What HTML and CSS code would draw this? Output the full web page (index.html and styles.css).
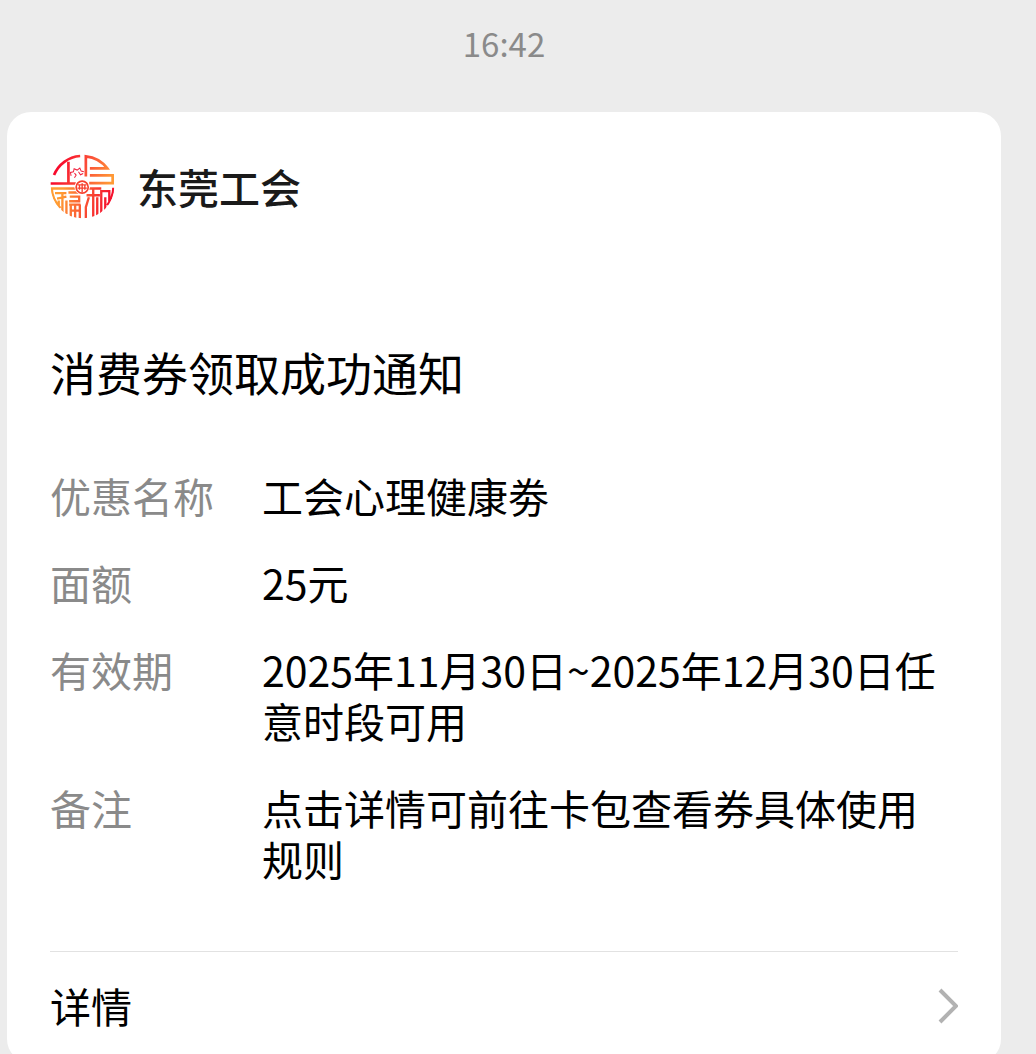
FILE: index.html
```html
<!DOCTYPE html>
<html lang="zh-CN">
<head>
  <meta charset="utf-8">
  <meta name="viewport" content="width=device-width, initial-scale=1">
  <title>东莞工会</title>
  <link rel="stylesheet" href="styles.css">
</head>

<body>
  <main class="chat">
    <time class="time" datetime="16:42">16:42</time>

    <article class="card">
      <header class="account">
        <svg class="logo" viewBox="29 27 194 194" aria-hidden="true">
          <defs>
            <linearGradient id="top" gradientUnits="userSpaceOnUse" x1="60" y1="50" x2="210" y2="110">
              <stop offset="0" stop-color="#f80a2c"/>
              <stop offset="0.5" stop-color="#fb5038"/>
              <stop offset="1" stop-color="#ff9a35"/>
            </linearGradient>
            <linearGradient id="bottom" gradientUnits="userSpaceOnUse" x1="60" y1="150" x2="200" y2="190">
              <stop offset="0" stop-color="#ff9c33"/>
              <stop offset="0.45" stop-color="#fb5f35"/>
              <stop offset="1" stop-color="#f5102c"/>
            </linearGradient>
            <clipPath id="disc">
              <circle cx="126" cy="124" r="95"/>
            </clipPath>
          </defs>
          <g fill="none" stroke="url(#top)" stroke-width="8">
            <path d="M41 90A91 91 0 0 1 119 33M84 50V114M31 115H106"/>
            <path d="M136 94V34A91 91 0 0 1 200 70H148M148 91H216V114H146"/>
          </g>
          <g fill="none" stroke="url(#bottom)" stroke-width="7" clip-path="url(#disc)">
            <path d="M31 130H106M34 128A92 92 0 0 0 60 188M44 144H78M66 144V202M50 160L78 154M55 166V188M78 166V206"/>
            <path d="M84 142H120M88 154H116V168H86M91 178V222M104 178V222M118 178V222M86 178H120M88 196H120"/>
            <path d="M144 130H182M138 150H178M158 130V222M145 156L136 186V222M170 156V222M182 222V138H206V196M194 156V206M218 128A92 92 0 0 1 200 180"/>
          </g>
          <!-- flower -->
          <path d="M92 92l-2-10 9-2 2-9 9 4 8-6 4 9 8 2M102 84l5 6-5 8M114 80l6 9 8-4" fill="none" stroke="#f0203c" stroke-width="3"/>
          <circle cx="125" cy="126" r="23" fill="#fff"/>
          <circle cx="125" cy="126" r="18" fill="none" stroke="#f7402e" stroke-width="5"/>
          <path d="M112 119H138M125 114V141M111 129H139M117 119V134M133 119V134" fill="none" stroke="#f7402e" stroke-width="4"/>
        </svg>
        <span class="account-name">东莞工会</span>
      </header>

      <h1 class="title">消费券领取成功通知</h1>

      <dl class="fields">
        <dt>优惠名称</dt>
        <dd>工会心理健康劵</dd>
        <dt>面额</dt>
        <dd>25元</dd>
        <dt>有效期</dt>
        <dd>2025年11月30日~2025年12月30日任意时段可用</dd>
        <dt>备注</dt>
        <dd>点击详情可前往卡包查看券具体使用规则</dd>
      </dl>

      <a class="detail" href="#">
        <span>详情</span>
        <svg class="arrow" viewBox="0 0 20 36" aria-hidden="true">
          <path d="M2 2L18 18L2 34"/>
        </svg>
      </a>
    </article>
  </main>
</body>

</html>
```

FILE: styles.css
```css
body {
  margin: 0;
  background-color: #ececec;
  color: #000;
  font-family: "Noto Sans CJK SC", sans-serif;
  font-size: 41px;
  line-height: 51px;
}

.chat {
  display: flex;
  flex-direction: column;
  padding: 18px 35px 0 7px;
}

.time {
  margin-bottom: 43px;
  color: #8a8a8a;
  font-size: 33px;
  text-align: center;
}

.card {
  padding: 42px 43px 0;
  border-radius: 24px;
  background-color: #fff;
}

.account {
  display: flex;
  align-items: center;
  gap: 22px;
}

.logo {
  width: 65px;
  height: 65px;
}

.account-name {
  color: #1a1a1a;
  font-weight: 500;
}

.title {
  margin: 125px 0 72px;
  font-size: 46px;
  font-weight: 400;
  line-height: 54px;
}

.fields {
  display: grid;
  grid-template-columns: 212px 1fr;
  row-gap: 36px;
  margin: 0 0 67px;
}

.fields dt {
  color: #8a8a8a;
}

.fields dd {
  margin: 0;
}

.detail {
  display: flex;
  align-items: center;
  justify-content: space-between;
  padding: 28px 0 32px;
  border-top: 1px solid #e2e2e2;
  color: inherit;
  text-decoration: none;
}

.arrow {
  width: 20px;
  height: 36px;
  fill: none;
  stroke: #b2b2b2;
  stroke-width: 4;
}
```
